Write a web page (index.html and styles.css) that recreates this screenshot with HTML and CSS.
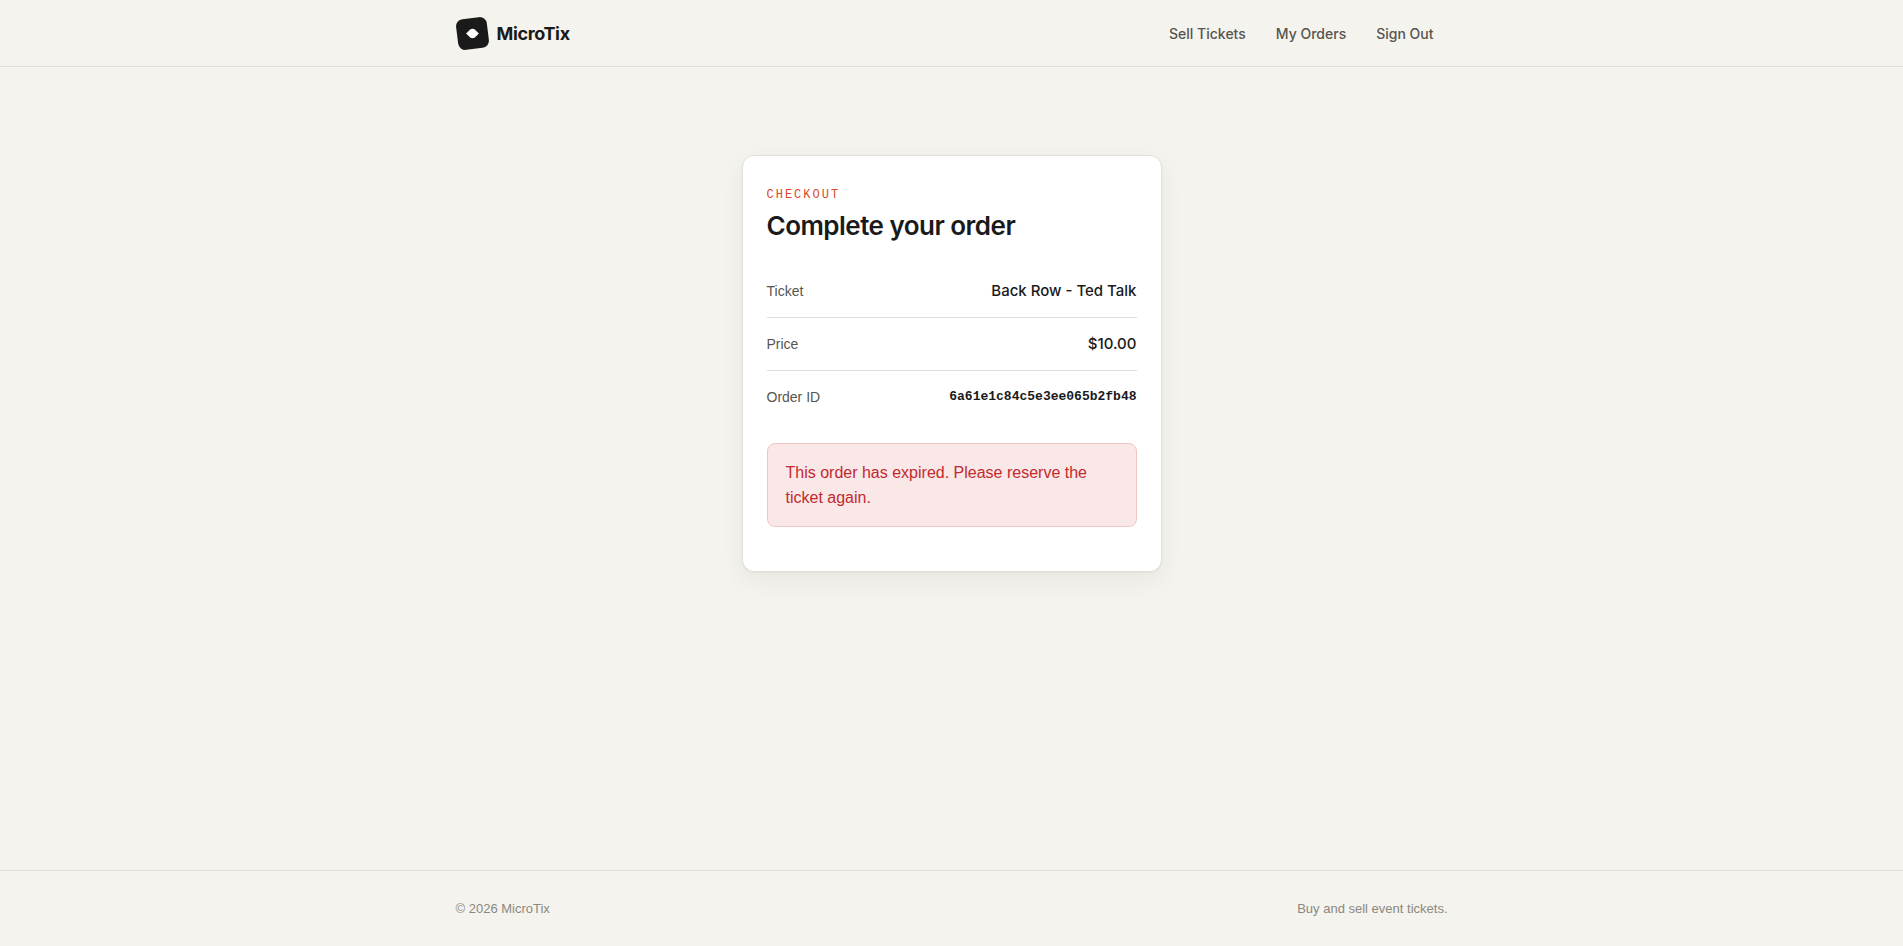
FILE: index.html
```
<!DOCTYPE html>
<html lang="en">
<head>
<meta charset="UTF-8" />
<meta name="viewport" content="width=device-width, initial-scale=1" />
<title>Checkout - MicroTix</title>
<link rel="stylesheet" href="styles.css">
</head>
<body>

<header class="site-header">
  <div class="container header-inner">
    <a class="brand" href="#">
      <svg class="brand-mark" viewBox="0 0 32 32" aria-hidden="true">
        <rect x="1" y="1" width="30" height="30" rx="7" fill="#1a1a1a" transform="rotate(-7 16 16)"/>
        <path d="M9.8 16 14 11.9Q16 11.1 18 11.9L22.2 16 18 20.1Q16 20.9 14 20.1Z" fill="#fff"/>
      </svg>
      <span>MicroTix</span>
    </a>
    <nav class="nav">
      <a href="#">Sell Tickets</a>
      <a href="#">My Orders</a>
      <a href="#">Sign Out</a>
    </nav>
  </div>
</header>

<main class="page">
  <section class="card">
    <p class="eyebrow">Checkout</p>
    <h1>Complete your order</h1>

    <dl class="details">
      <div class="row">
        <dt>Ticket</dt>
        <dd>Back Row - Ted Talk</dd>
      </div>
      <div class="row">
        <dt>Price</dt>
        <dd>$10.00</dd>
      </div>
      <div class="row">
        <dt>Order ID</dt>
        <dd class="mono">6a61e1c84c5e3ee065b2fb48</dd>
      </div>
    </dl>

    <div class="alert" role="alert">This order has expired. Please reserve the ticket again.</div>
  </section>
</main>

<footer class="site-footer">
  <div class="container footer-inner">
    <span>© 2026 MicroTix</span>
    <span>Buy and sell event tickets.</span>
  </div>
</footer>

</body>
</html>
```
FILE: styles.css
```
* {
  box-sizing: border-box;
}
body {
  display: flex;
  flex-direction: column;
  min-height: 100vh;
  margin: 0;
  font-family: "Liberation Sans", Arial, sans-serif;
  font-size: 16px;
  line-height: 25px;
  background: #f5f3ee;
  color: #1a1a1a;
}
a {
  color: inherit;
  text-decoration: none;
}
.brand, .nav, h1, .row dd {
  font-family: Inter, sans-serif;
}
.container {
  width: 100%;
  max-width: 1040px;
  margin: 0 auto;
  padding: 0 24px;
}

/* header */
.site-header {
  border-bottom: 1px solid #e0ded8;
}
.header-inner {
  display: flex;
  align-items: center;
  justify-content: space-between;
  height: 66px;
}
.brand {
  display: flex;
  align-items: center;
  gap: 8px;
  font-size: 18px;
  font-weight: 700;
  letter-spacing: -0.02em;
}
.brand-mark {
  width: 33px;
  height: 33px;
}
.nav {
  display: flex;
  gap: 2px;
  font-size: 14px;
  font-weight: 500;
  color: #57554e;
}
.nav a {
  padding: 8px 14px;
}
.nav a:hover {
  color: #1a1a1a;
}

/* checkout card */
.page {
  flex: 1;
  padding: 88px 24px;
}
.card {
  max-width: 420px;
  margin: 0 auto;
  padding: 24px 24px 44px;
  background: #fff;
  border: 1px solid #e3dfd6;
  border-radius: 12px;
  box-shadow: 0 1px 2px rgba(26, 26, 26, 0.04), 0 8px 24px rgba(26, 26, 26, 0.06);
}
.eyebrow {
  margin: 0 0 2px;
  font-family: "Liberation Mono", monospace;
  font-size: 12px;
  line-height: 30px;
  letter-spacing: 2px;
  text-transform: uppercase;
  color: #d9482b;
}
h1 {
  margin: 0 0 25px;
  font-size: 26px;
  line-height: 28px;
  font-weight: 600;
  letter-spacing: -0.02em;
}
.details {
  margin: 0 0 20px;
}
.row {
  display: flex;
  align-items: center;
  justify-content: space-between;
  padding: 14px 0;
  line-height: 24px;
}
.row + .row {
  border-top: 1px solid #e3dfd6;
}
.row dt {
  font-size: 14px;
  color: #57554e;
}
.row dd {
  margin: 0;
  font-size: 15px;
  font-weight: 500;
}
.row .mono {
  font-family: "Liberation Mono", monospace;
  font-size: 13px;
  font-weight: 600;
}
.alert {
  padding: 16px 18px;
  background: #fae7e7;
  border: 1px solid #f0c5c6;
  border-radius: 8px;
  color: #c22a2e;
}

/* footer */
.site-footer {
  border-top: 1px solid #e0ded8;
}
.footer-inner {
  display: flex;
  justify-content: space-between;
  padding-top: 25px;
  padding-bottom: 25px;
  font-size: 13px;
  color: #8a887f;
}
```
